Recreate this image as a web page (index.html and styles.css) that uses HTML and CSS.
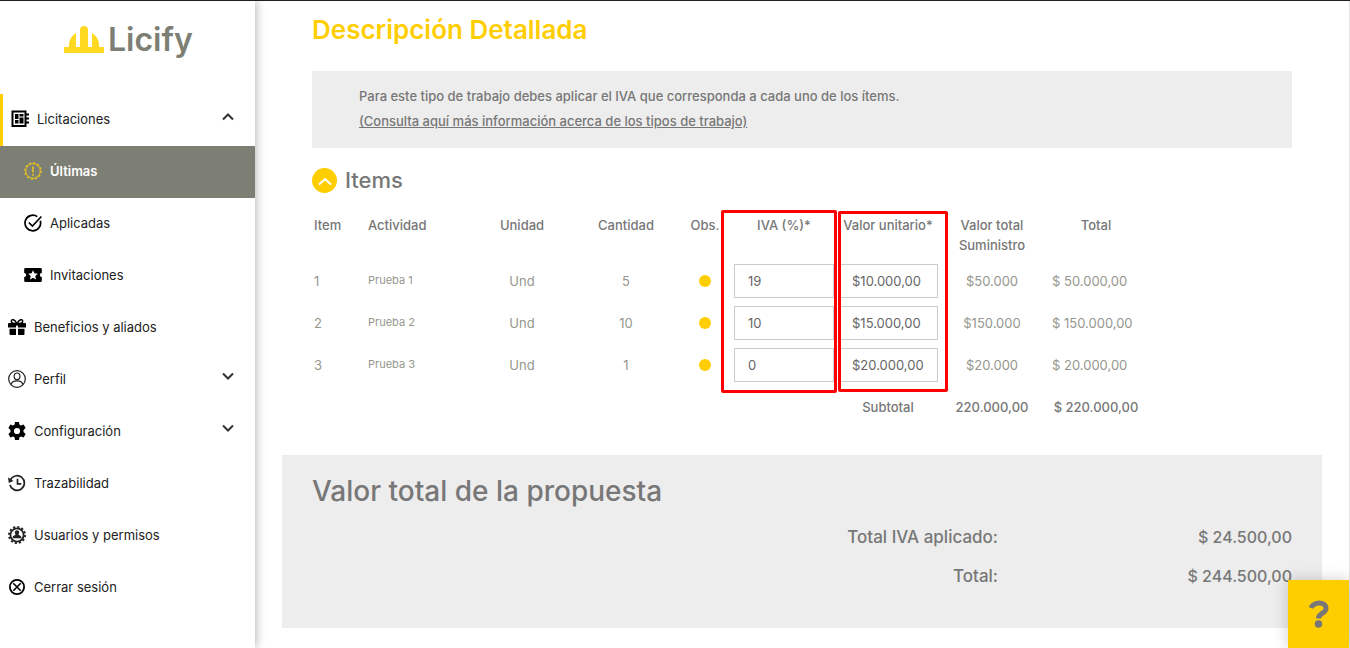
FILE: index.html
```html
<!DOCTYPE html>
<html lang="es">
<head>
<meta charset="utf-8">
<meta name="viewport" content="width=device-width, initial-scale=1">
<title>Licify - Descripción Detallada</title>
<link rel="stylesheet" href="styles.css">
</head>
<body>
<div class="app">
  <aside class="sidebar">
    <a class="logo" href="#">
      <svg class="logo-mark" viewBox="0 0 40 28" aria-hidden="true"><path fill="#ffd91f" d="M0 21h5V18a15 15 0 0 1 7-11v14h4V4a4 4 0 0 1 8 0v17h4V7a15 15 0 0 1 7 11v3h5v6H0z"/></svg>
      <span>Licify</span>
    </a>
    <nav class="menu">
      <a class="item open" href="#">
        <svg class="icon" viewBox="0 0 18 18"><path fill="none" stroke="#000" stroke-width="2" d="M1.500 1.500h13v14.500h-13z"/><path d="M4 4h3.500v5H4zM8.500 4h4v2.500h-4zM4 10h3.500v3.500H4zM8.500 7.500h4v6h-4zM15 3.500h3v2h-3zM15 7.500h3v2h-3zM15 11.500h3v2h-3z"/></svg>
        <span>Licitaciones</span>
        <svg class="chevron" viewBox="0 0 14 9"><path d="M2 7.500 7 2.500l5 5"/></svg>
      </a>
      <a class="item sub active" href="#">
        <svg class="icon" viewBox="0 0 18 18"><g fill="none" stroke="#e6c521"><circle cx="9" cy="9" r="7.300"/><circle cx="9" cy="9" r="8.100" stroke-width="1.400" stroke-dasharray="2.100 2.140"/><path stroke-width="1.600" d="M9 4.500v6M9 12v1.800"/></g></svg>
        <span>Últimas</span>
      </a>
      <a class="item sub" href="#">
        <svg class="icon" viewBox="0 0 18 18"><path fill="none" stroke="#000" stroke-width="1.700" d="M13.300 2.600a7.800 7.800 0 1 0 3 4.200M4.800 8.500l3.600 3.500 9-9.500"/></svg>
        <span>Aplicadas</span>
      </a>
      <a class="item sub" href="#">
        <svg class="icon" viewBox="0 0 18 18"><path d="M1.500 2h15a1.300 1.300 0 0 1 1.300 1.300V7a2 2 0 0 0 0 4v3.700a1.300 1.300 0 0 1-1.300 1.300h-15A1.300 1.300 0 0 1 .2 14.700V11a2 2 0 0 0 0-4V3.300A1.300 1.300 0 0 1 1.500 2z"/><path fill="#fff" d="m9 4.200 1.400 3.100 3.400.4-2.500 2.300.7 3.400-3-1.700-3 1.700.7-3.400-2.500-2.300 3.400-.4z"/></svg>
        <span>Invitaciones</span>
      </a>
      <a class="item" href="#">
        <svg class="icon" viewBox="0 0 18 18"><path d="M1 5h16a1 1 0 0 1 1 1v3.500h-8V7.500H8v2H0V6a1 1 0 0 1 1-1zM1.500 10.700H8V17H2.500a1 1 0 0 1-1-1zM10 10.700h6.500V16a1 1 0 0 1-1 1H10z"/><path fill="none" stroke="#000" stroke-width="1.500" d="M9 6C7 1 3.500.8 3.300 3.200 3.200 5.200 6 5.500 9 5.500s5.800-.3 5.700-2.300C14.500.8 11 1 9 6z"/></svg>
        <span>Beneficios y aliados</span>
      </a>
      <a class="item" href="#">
        <svg class="icon" viewBox="0 0 18 18"><g fill="none" stroke="#222" stroke-width="1.200"><circle cx="9" cy="9" r="8.300"/><ellipse cx="9" cy="6.300" rx="2.900" ry="3.300"/><path d="M3 14.700c.8-3.600 3-3.900 6-3.900s5.200.3 6 3.900"/></g></svg>
        <span>Perfil</span>
        <svg class="chevron" viewBox="0 0 14 9"><path d="m2 1.500 5 5 5-5"/></svg>
      </a>
      <a class="item" href="#">
        <svg class="icon" viewBox="0 0 18 18"><path fill-rule="evenodd" d="M7 0h4l.5 2.700 1.500.9 2.600-1 2 3.500L15.500 8v2l2.100 1.900-2 3.500-2.600-1-1.500.9L11 18H7l-.5-2.700-1.500-.9-2.600 1-2-3.500L2.500 10V8L.4 6.100l2-3.500 2.600 1 1.500-.9zM9 5.900a3.100 3.100 0 1 0 0 6.200 3.100 3.100 0 0 0 0-6.200z"/></svg>
        <span>Configuración</span>
        <svg class="chevron" viewBox="0 0 14 9"><path d="m2 1.500 5 5 5-5"/></svg>
      </a>
      <a class="item" href="#">
        <svg class="icon" viewBox="0 0 18 18"><path fill="none" stroke="#222" stroke-width="1.700" d="M2.300 6.300a7.300 7.300 0 1 1-.3 4.600M9.500 4.800v5h3.800"/><path fill="#222" d="M0 3.500 5.500 7 .8 9z"/></svg>
        <span>Trazabilidad</span>
      </a>
      <a class="item" href="#">
        <svg class="icon" viewBox="0 0 18 18"><circle cx="9" cy="9" r="6.600" fill="none" stroke="#222" stroke-width="1.800"/><circle cx="9" cy="9" r="8.100" fill="none" stroke="#222" stroke-width="1.800" stroke-dasharray="2.200 2.040"/><path fill="#222" d="M9 4.300c1.500 0 2.300 1 2.200 2.300-.1 1-.6 1.600-.8 2 .1.900 2.600.8 3 2.600v1H4.600v-1c.4-1.800 2.900-1.700 3-2.600-.2-.4-.7-1-.8-2C6.700 5.300 7.500 4.300 9 4.300z"/></svg>
        <span>Usuarios y permisos</span>
      </a>
      <a class="item" href="#">
        <svg class="icon" viewBox="0 0 18 18"><circle cx="9" cy="9" r="7.100" fill="none" stroke="#000" stroke-width="1.800"/><path stroke="#000" stroke-width="1.600" d="m5.300 5.300 7.400 7.400M12.700 5.300l-7.400 7.400"/></svg>
        <span>Cerrar sesión</span>
      </a>
    </nav>
  </aside>

  <main class="content">
    <div class="inner">
      <h1 class="title">Descripción Detallada</h1>
      <div class="notice">
        <p>Para este tipo de trabajo debes aplicar el IVA que corresponda a cada uno de los ítems.</p>
        <p><a href="#">(Consulta aquí más información acerca de los tipos de trabajo)</a></p>
      </div>
      <div class="section-head">
        <button class="toggle" type="button" aria-label="Contraer items"><svg viewBox="0 0 14 9"><path d="M1 7.500l6-5.500 6 5.500"/></svg></button>
        <h2>Items</h2>
      </div>
      <div class="table-wrap">
        <table class="items">
          <colgroup><col class="narrow"><col><col><col><col class="narrow"><col><col><col><col></colgroup>
          <thead>
            <tr><th class="left">Item</th><th class="left">Actividad</th><th>Unidad</th><th>Cantidad</th><th>Obs.</th><th id="iva">IVA (%)*</th><th id="unit">Valor unitario*</th><th>Valor total Suministro</th><th>Total</th></tr>
          </thead>
          <tbody>
            <tr><td class="left">1</td><td class="left activity">Prueba 1</td><td>Und</td><td>5</td><td><span class="dot"></span></td><td><input aria-labelledby="iva" type="text" value="19"></td><td><input aria-labelledby="unit" type="text" value="$10.000,00"></td><td>$50.000</td><td class="total">$ 50.000,00</td></tr>
            <tr><td class="left">2</td><td class="left activity">Prueba 2</td><td>Und</td><td>10</td><td><span class="dot"></span></td><td><input aria-labelledby="iva" type="text" value="10"></td><td><input aria-labelledby="unit" type="text" value="$15.000,00"></td><td>$150.000</td><td class="total">$ 150.000,00</td></tr>
            <tr><td class="left">3</td><td class="left activity">Prueba 3</td><td>Und</td><td>1</td><td><span class="dot"></span></td><td><input aria-labelledby="iva" type="text" value="0"></td><td><input aria-labelledby="unit" type="text" value="$20.000,00"></td><td>$20.000</td><td class="total">$ 20.000,00</td></tr>
          </tbody>
          <tfoot>
            <tr><td colspan="6"></td><td>Subtotal</td><td>220.000,00</td><td>$ 220.000,00</td></tr>
          </tfoot>
        </table>
        <div class="mark mark-iva"></div>
        <div class="mark mark-unit"></div>
      </div>
    </div>
    <section class="summary">
      <h2>Valor total de la propuesta</h2>
      <dl>
        <dt>Total IVA aplicado:</dt><dd>$ 24.500,00</dd>
        <dt>Total:</dt><dd>$ 244.500,00</dd>
      </dl>
    </section>
  </main>
</div>
<button class="help" type="button" aria-label="Ayuda"><svg viewBox="0 0 20 28"><path fill="none" stroke="#777" stroke-width="5" d="M2 8C4 2 17 .5 17 8.500c0 5-7.500 4.500-7.500 10"/><circle cx="9.500" cy="24" r="3.800" fill="#777"/></svg></button>
</body>
</html>
```
FILE: styles.css
```css
* {
  box-sizing: border-box;
}

body {
  margin: 0;
  font-family: Inter, "Liberation Sans", sans-serif;
  font-size: 13px;
  color: #777;
  background: #fff;
}

h1,
h2,
p,
dl,
dd {
  margin: 0;
}

.app {
  display: flex;
  min-height: 100vh;
  border-top: 1px solid #222;
}

.sidebar {
  flex: 0 0 255px;
  box-shadow: 2px 0 8px rgba(0, 0, 0, 0.25);
}

.logo {
  display: flex;
  align-items: center;
  gap: 4px;
  height: 93px;
  padding: 0 0 16px 64px;
  font-size: 32px;
  line-height: 40px;
  font-weight: 600;
  color: #7e7f74;
  text-decoration: none;
}

.logo-mark {
  width: 40px;
  height: 28px;
}

.item {
  display: flex;
  align-items: center;
  gap: 8px;
  height: 52px;
  padding: 0 20px 2px 8px;
  color: #222;
  text-decoration: none;
}

.item.open {
  border-left: 3px solid #ffce00;
}

.item.sub {
  padding-left: 24px;
}

.item.active {
  background: #7e7f74;
  color: #fff;
  font-weight: 600;
}

.icon {
  width: 18px;
  height: 18px;
}

.chevron {
  width: 14px;
  height: 9px;
  margin: 0 0 6px auto;
}

.chevron path,
.toggle path {
  fill: none;
  stroke: #333;
  stroke-width: 2;
}

.content {
  flex: 1;
  min-width: 0;
  padding: 9px 27px 20px;
  border-right: 1px solid #e4e4e4;
}

.inner {
  padding: 0 30px;
}

.title {
  font-size: 26px;
  line-height: 40px;
  font-weight: 600;
  color: #ffce00;
}

.notice {
  margin-top: 21px;
  padding: 13px 47px 14px;
  background: #ededed;
  line-height: 25px;
  font-weight: 500;
}

.notice a {
  color: inherit;
}

.section-head {
  display: flex;
  align-items: center;
  gap: 8px;
  margin-top: 17px;
}

.section-head h2 {
  font-size: 22px;
  line-height: 30px;
  font-weight: 500;
}

.toggle {
  display: grid;
  place-items: center;
  width: 25px;
  height: 25px;
  padding: 2px 0 0;
  border: 0;
  border-radius: 50%;
  background: #ffce00;
}

.toggle svg {
  width: 14px;
  height: 9px;
}

.toggle path {
  stroke: #fff;
}

.table-wrap {
  position: relative;
  width: calc(100% - 144px);
  margin-top: 20px;
}

.items {
  width: 100%;
  table-layout: fixed;
  border-collapse: collapse;
}

.narrow {
  width: 54px;
}

.items th {
  height: 45px;
  padding: 0;
  vertical-align: top;
  line-height: 20px;
  font-weight: 500;
  white-space: nowrap;
}

.items th:nth-child(8) {
  white-space: normal;
}

.items td {
  height: 42px;
  padding: 0 2px;
  text-align: center;
  color: #96978e;
}

.items .left {
  padding-left: 2px;
  text-align: left;
}

.items .activity {
  padding-bottom: 2px;
  font-size: 11px;
}

.items .total {
  padding-left: 8px;
  text-align: left;
}

.items tfoot td {
  color: #777;
  font-weight: 500;
}

.items input {
  display: block;
  width: 100%;
  height: 34px;
  padding: 0 13px;
  border: 1px solid #ccc;
  font: inherit;
  color: #666;
  background: #fff;
}

.dot {
  display: block;
  width: 12px;
  height: 12px;
  margin: 0 auto;
  border-radius: 50%;
  background: #ffce00;
}

.mark {
  position: absolute;
  top: -5px;
  right: 311px;
  width: 116px;
  height: 183px;
  border: 3px solid #f00;
  border-radius: 2px;
  pointer-events: none;
}

.mark-unit {
  top: -4px;
  right: 200px;
  width: 110px;
  height: 181px;
}

.summary {
  margin-top: 27px;
  padding: 16px 30px 32px;
  background: #ededed;
}

.summary h2 {
  font-size: 28px;
  line-height: 40px;
  font-weight: 500;
}

.summary dl {
  display: grid;
  grid-template-columns: 70% 30%;
  margin-top: 7px;
  font-size: 17px;
  line-height: 39px;
  font-weight: 500;
  text-align: right;
}

.summary dd {
  font-size: 16px;
}

.help {
  position: fixed;
  right: 1px;
  bottom: 0;
  display: grid;
  place-items: center;
  width: 61px;
  height: 68px;
  padding: 0;
  border: 0;
  background: #ffce00;
  box-shadow: 0 0 14px rgba(0, 0, 0, 0.2);
}

.help svg {
  width: 20px;
  height: 28px;
}
```
